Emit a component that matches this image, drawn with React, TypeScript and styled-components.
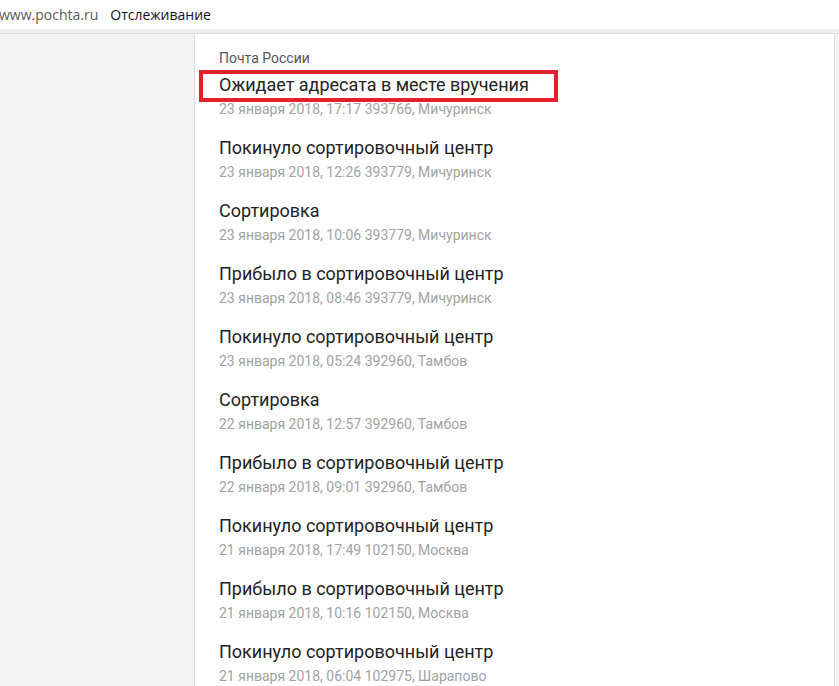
import React from 'react';
import styled, { createGlobalStyle } from 'styled-components';

interface TrackEvent {
  title: string;
  date: string;
  index: string;
  city: string;
}

const events: TrackEvent[] = [
  { title: 'Ожидает адресата в месте вручения', date: '23 января 2018, 17:17', index: '393766', city: 'Мичуринск' },
  { title: 'Покинуло сортировочный центр', date: '23 января 2018, 12:26', index: '393779', city: 'Мичуринск' },
  { title: 'Сортировка', date: '23 января 2018, 10:06', index: '393779', city: 'Мичуринск' },
  { title: 'Прибыло в сортировочный центр', date: '23 января 2018, 08:46', index: '393779', city: 'Мичуринск' },
  { title: 'Покинуло сортировочный центр', date: '23 января 2018, 05:24', index: '392960', city: 'Тамбов' },
  { title: 'Сортировка', date: '22 января 2018, 12:57', index: '392960', city: 'Тамбов' },
  { title: 'Прибыло в сортировочный центр', date: '22 января 2018, 09:01', index: '392960', city: 'Тамбов' },
  { title: 'Покинуло сортировочный центр', date: '21 января 2018, 17:49', index: '102150', city: 'Москва' },
  { title: 'Прибыло в сортировочный центр', date: '21 января 2018, 10:16', index: '102150', city: 'Москва' },
  { title: 'Покинуло сортировочный центр', date: '21 января 2018, 06:04', index: '102975', city: 'Шарапово' },
];

const App: React.FC = () => {
  return (
    <>
      <GlobalStyle />
      <Page>
        <TopBar>
          <Domain>www.pochta.ru</Domain>
          <PageTitle>Отслеживание</PageTitle>
        </TopBar>
        <Body>
          <Sidebar />
          <Content>
            <Carrier>Почта России</Carrier>
            {events.map((ev, i) => (
              <EventItem key={i}>
                <EventTitle $marked={i === 0}>{ev.title}</EventTitle>
                <EventMeta>
                  {ev.date} {ev.index}, {ev.city}
                </EventMeta>
              </EventItem>
            ))}
          </Content>
          <RightGutter />
        </Body>
      </Page>
    </>
  );
};

export default App;

const GlobalStyle = createGlobalStyle`
  html, body {
    margin: 0;
    padding: 0;
    background: #ffffff;
  }
  body {
    font-family: Roboto, "Noto Sans", sans-serif;
    overflow: hidden;
  }
`;

const Page = styled.div`
  width: 839px;
  height: 686px;
  display: flex;
  flex-direction: column;
  overflow: hidden;
`;

const TopBar = styled.div`
  height: 28px;
  flex-shrink: 0;
  display: flex;
  align-items: center;
  gap: 12px;
  background: #ffffff;
  border-bottom: 4px solid #ececec;
  box-shadow: 0 1px 0 #dedede;
  font-family: "Open Sans", "Noto Sans", sans-serif;
  font-size: 14px;
  margin-left: -1px;
  padding-bottom: 1px;
`;

const Domain = styled.span`
  color: #5a5a5a;
`;

const PageTitle = styled.span`
  color: #111111;
`;

const Body = styled.div`
  flex: 1;
  display: flex;
  margin-top: 1px;
  min-height: 0;
`;

const Sidebar = styled.div`
  width: 194px;
  flex-shrink: 0;
  background: #f3f3f3;
  border-right: 1px solid #dcdcdc;
`;

const RightGutter = styled.div`
  flex: 1;
  background: #f3f3f3;
  border-left: 1px solid #dcdcdc;
`;

const Content = styled.div`
  width: 615px;
  flex-shrink: 0;
  background: #ffffff;
  padding: 16px 0 0 24px;
`;

const Carrier = styled.div`
  font-size: 14px;
  line-height: 16px;
  color: #555555;
  margin-bottom: 7px;
`;

const EventItem = styled.div`
  margin-bottom: 15px;
`;

const EventTitle = styled.div<{ $marked?: boolean }>`
  position: relative;
  width: fit-content;
  font-size: 18px;
  line-height: 24px;
  color: #222222;

  &::after {
    content: '';
    display: ${({ $marked }) => ($marked ? 'block' : 'none')};
    position: absolute;
    top: -3px;
    bottom: -5px;
    left: -20px;
    right: -29px;
    border: 4px solid #e3212b;
  }
`;

const EventMeta = styled.div`
  font-size: 14px;
  line-height: 24px;
  color: #a2a2a2;
`;
